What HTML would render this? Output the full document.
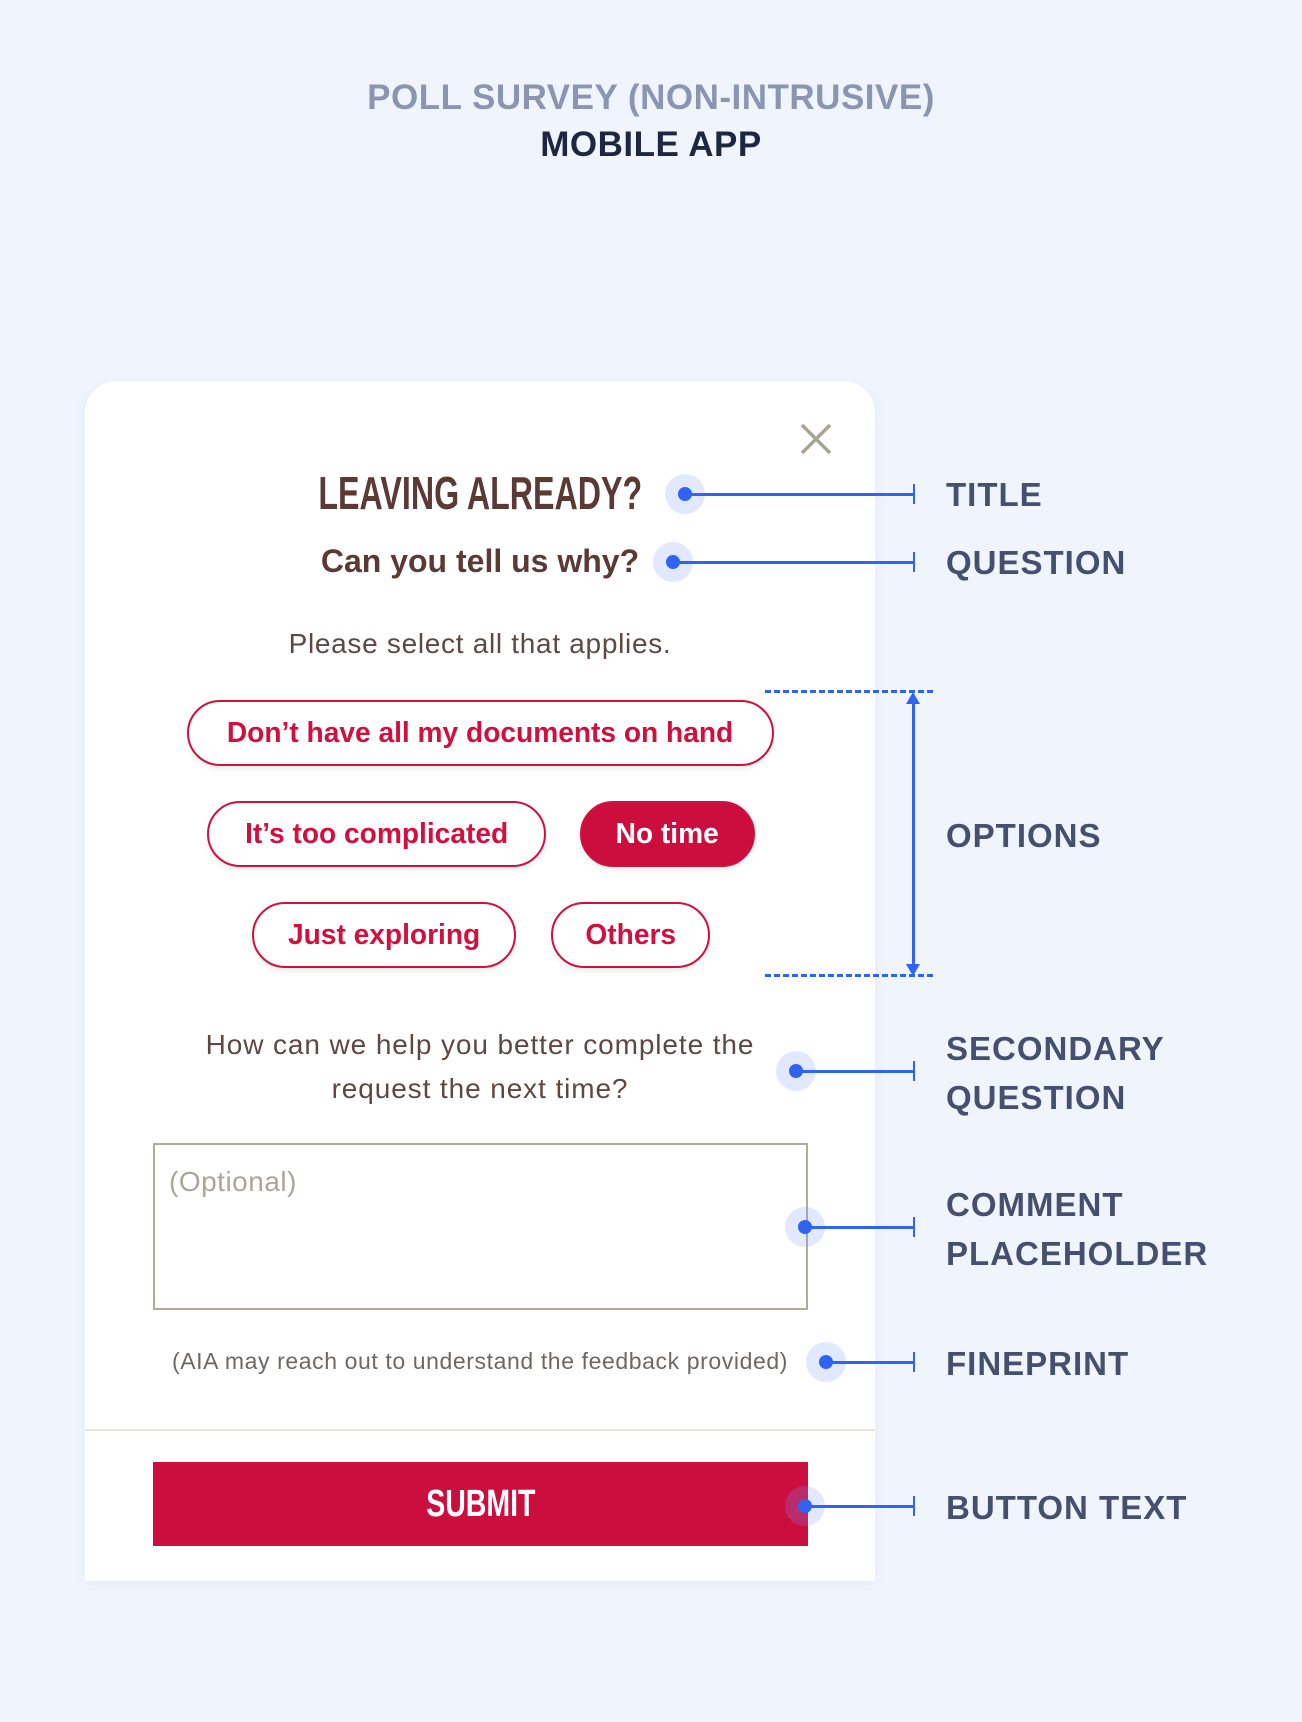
<!DOCTYPE html>
<html><head><meta charset="utf-8"><style>
*{margin:0;padding:0;box-sizing:border-box}
body{width:1302px;height:1722px;background:#f0f4fd;font-family:"Liberation Sans",sans-serif;position:relative;overflow:hidden}
.a{position:absolute}
.c{text-align:center;white-space:nowrap}
.h1{left:0;width:1302px;font-weight:bold;font-size:35px;letter-spacing:0.5px}
.card{left:85px;top:381px;width:790px;height:1200px;background:#fff;border-radius:32px 32px 0 0;box-shadow:0 2px 12px rgba(60,80,120,0.06)}
.pill{border:2px solid #d0103f;border-radius:34px;color:#d0103f;font-weight:bold;font-size:29px;display:flex;align-items:center;justify-content:center;box-shadow:0 3px 6px rgba(0,0,0,0.08)}
.pill span{display:inline-block;transform:scaleX(0.97)}
.lbl{left:946px;color:#45506e;font-weight:bold;font-size:33px;letter-spacing:1px;line-height:49px}
.dot{width:40px;height:40px;border-radius:50%;background:rgba(120,150,255,0.22)}
.dot::after{content:"";position:absolute;left:13px;top:13px;width:14px;height:14px;border-radius:50%;background:#2f63f0}
.ln{height:3px;background:#2f63f0}
.tk{width:2px;height:20px;background:#2f63f0}
.brn{color:#5b3a36}
</style></head><body>
<div class="a c h1" style="top:78px;color:#8a96b0">POLL SURVEY (NON-INTRUSIVE)</div>
<div class="a c h1" style="top:125px;color:#1e2740">MOBILE APP</div>

<div class="a card"></div>
<svg class="a" style="left:799px;top:422px" width="34" height="34"><path d="M3 3L31 31M31 3L3 31" stroke="#a8a596" stroke-width="3.5"/></svg>
<div class="a c brn" style="left:230px;width:500px;top:466px;font-size:46px;font-weight:bold"><span style="display:inline-block;transform:scaleX(0.70)">LEAVING ALREADY?</span></div>
<div class="a c brn" style="left:230px;width:500px;top:543px;font-size:32px;font-weight:bold">Can you tell us why?</div>
<div class="a c brn" style="left:180px;width:600px;top:628px;font-size:28px;letter-spacing:0.7px;color:#5e4844">Please select all that applies.</div>

<div class="a pill" style="left:187px;top:700px;width:587px;height:66px"><span>Don’t have all my documents on hand</span></div>
<div class="a pill" style="left:207px;top:801px;width:339px;height:66px"><span>It’s too complicated</span></div>
<div class="a pill" style="left:580px;top:801px;width:175px;height:66px;background:#cc0e3f;color:#fff"><span>No time</span></div>
<div class="a pill" style="left:252px;top:902px;width:264px;height:66px"><span>Just exploring</span></div>
<div class="a pill" style="left:551px;top:902px;width:159px;height:66px"><span>Others</span></div>

<div class="a c" style="left:130px;width:700px;top:1023px;font-size:28px;letter-spacing:0.9px;line-height:44px;color:#5e4844">How can we help you better complete the<br>request the next time?</div>
<div class="a" style="left:153px;top:1143px;width:655px;height:167px;border:2px solid #b0ac9c"></div>
<div class="a" style="left:169px;top:1166px;font-size:28px;letter-spacing:0.5px;color:#aaa69a">(Optional)</div>
<div class="a c" style="left:130px;width:700px;top:1348px;font-size:23px;letter-spacing:0.6px;color:#6e6762">(AIA may reach out to understand the feedback provided)</div>
<div class="a" style="left:85px;top:1429px;width:790px;height:2px;background:#e6e4de"></div>
<div class="a" style="left:153px;top:1462px;width:655px;height:84px;background:#cc0e3f"></div>
<div class="a c" style="left:153px;width:655px;top:1483px;font-size:38px;font-weight:bold;color:#fff"><span style="display:inline-block;transform:scaleX(0.75)">SUBMIT</span></div>

<!-- annotations -->
<div class="a dot" style="left:665px;top:474px"></div><div class="a ln" style="left:685px;top:493px;width:229px"></div><div class="a tk" style="left:913px;top:484px"></div>
<div class="a lbl" style="top:470px">TITLE</div>
<div class="a dot" style="left:653px;top:542px"></div><div class="a ln" style="left:673px;top:561px;width:241px"></div><div class="a tk" style="left:913px;top:552px"></div>
<div class="a lbl" style="top:538px">QUESTION</div>

<div class="a" style="left:765px;top:690px;width:168px;border-top:3px dashed #2f63f0"></div>
<div class="a" style="left:765px;top:974px;width:168px;border-top:3px dashed #2f63f0"></div>
<div class="a" style="left:912px;top:700px;width:3px;height:264px;background:#2f63f0"></div>
<svg class="a" style="left:905px;top:692px" width="16" height="284"><path d="M8 0L1 12H15Z M8 284L1 272H15Z" fill="#2f63f0"/></svg>
<div class="a lbl" style="top:811px">OPTIONS</div>

<div class="a dot" style="left:776px;top:1051px"></div><div class="a ln" style="left:796px;top:1070px;width:118px"></div><div class="a tk" style="left:913px;top:1061px"></div>
<div class="a lbl" style="top:1024px">SECONDARY<br>QUESTION</div>
<div class="a dot" style="left:785px;top:1207px"></div><div class="a ln" style="left:805px;top:1226px;width:109px"></div><div class="a tk" style="left:913px;top:1217px"></div>
<div class="a lbl" style="top:1180px">COMMENT<br>PLACEHOLDER</div>
<div class="a dot" style="left:806px;top:1342px"></div><div class="a ln" style="left:826px;top:1361px;width:88px"></div><div class="a tk" style="left:913px;top:1352px"></div>
<div class="a lbl" style="top:1339px">FINEPRINT</div>
<div class="a dot" style="left:785px;top:1486px"></div><div class="a ln" style="left:805px;top:1505px;width:109px"></div><div class="a tk" style="left:913px;top:1496px"></div>
<div class="a lbl" style="top:1483px">BUTTON TEXT</div>
</body></html>
